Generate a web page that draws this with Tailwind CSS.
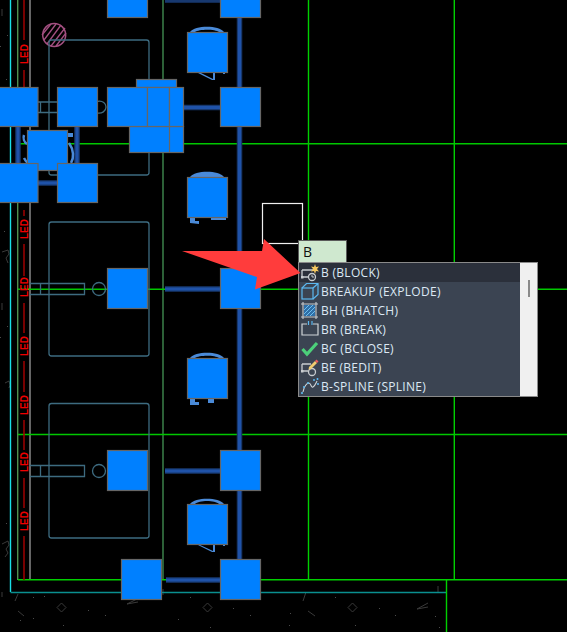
<!DOCTYPE html>
<html lang="en">
<head>
    <meta charset="UTF-8">
    <title>CAD block command</title>
    <script src="https://cdn.jsdelivr.net/npm/@tailwindcss/browser@4"></script>
</head>
<body class="bg-black overflow-hidden">
<div class="relative w-[567px] h-[632px] bg-black overflow-hidden">

    <!-- drawing -->
    <svg class="absolute inset-0" width="567" height="632" viewBox="0 0 567 632" fill="none">
        <!-- hatch noise -->
        <g stroke="#3a3a3a" stroke-width="1">
            <path d="M57 607.500l4.500-4.500 4.500 4.500-4.500 4.500z M203 607.500l4.500-4.500 4.500 4.500-4.500 4.500z M348 607.500l4.500-4.500 4.500 4.500-4.500 4.500z"/>
            <path d="M2 592v5 M18 594l-3 7 M18 611l6 5 M127 604l10-5 M127 604l11 -2 M163 595v-6 M306 592l-3 9 M308 611l7 5 M417 609l11-6 M417 609l11 -2 M438 592v-6"/>
            <path d="M2 544l6-3 1 4-3 4 2 4-3 4 M2 252l6-2 1 4-3 4 2 5 M5 383l4-2 1 4 -1 3"/>
            <path d="M2 9v7 M2 303v7"/>
        </g>
        <g fill="#4a4a4a">
            <rect x="7" y="35" width="1" height="1"/><rect x="0" y="46" width="1" height="1"/><rect x="6" y="79" width="1" height="1"/>
            <rect x="4" y="231" width="1" height="1"/><rect x="7" y="326" width="1" height="1"/><rect x="0" y="337" width="1" height="1"/>
            <rect x="6" y="523" width="1" height="1"/><rect x="20" y="620" width="1" height="1"/><rect x="33" y="597" width="1" height="1"/>
            <rect x="44" y="596" width="1" height="1"/><rect x="63" y="625" width="1" height="1"/><rect x="33" y="618" width="1" height="1"/>
            <rect x="88" y="610" width="1" height="1"/><rect x="105" y="615" width="1" height="1"/><rect x="125" y="597" width="1" height="1"/>
            <rect x="190" y="597" width="1" height="1"/><rect x="233" y="608" width="1" height="1"/><rect x="250" y="615" width="1" height="1"/>
            <rect x="178" y="619" width="1" height="1"/><rect x="210" y="627" width="1" height="1"/><rect x="289" y="625" width="1" height="1"/>
            <rect x="290" y="613" width="1" height="1"/><rect x="335" y="597" width="1" height="1"/><rect x="379" y="608" width="1" height="1"/>
            <rect x="395" y="615" width="1" height="1"/><rect x="355" y="625" width="1" height="1"/><rect x="435" y="616" width="1" height="1"/>
            <rect x="439" y="627" width="1" height="1"/>
        </g>

        <!-- frame lines -->
        <g stroke-width="1.400">
            <path d="M10.500 0V592" stroke="#19e0e8"/>
            <path d="M10.500 592.500H446" stroke="#0a8f8f"/>
            <path d="M17.700 0V580" stroke="#4f8f4f"/>
            <path d="M163 0V580" stroke="#3f8a4f"/>
            <path d="M30 0V580" stroke="#666666" stroke-width="2"/>
            <path d="M18 579.800H567 M308.500 0V580 M454.300 0V580 M446.500 580V632" stroke="#00d000"/>
            <path d="M19 143.800H567 M18 289.200H299 M347 289.200H567 M18 434.500H567" stroke="#00c800"/>
        </g>

        <!-- red LED circuit -->
        <path d="M24 0V40 M24 70V87 M24 210V216 M24 244V276 M24 303V333 M24 361V392 M24 420V450 M24 478V508 M24 536V580" stroke="#a00000" stroke-width="1.500"/>
        <g fill="#f00000" font-family="Liberation Sans, sans-serif" font-size="10" font-weight="700">
            <text transform="translate(27.500 64) rotate(-90)">LED</text>
            <text transform="translate(27.500 239) rotate(-90)">LED</text>
            <text transform="translate(27.500 297) rotate(-90)">LED</text>
            <text transform="translate(27.500 356) rotate(-90)">LED</text>
            <text transform="translate(27.500 415) rotate(-90)">LED</text>
            <text transform="translate(27.500 472) rotate(-90)">LED</text>
            <text transform="translate(27.500 531) rotate(-90)">LED</text>
        </g>

        <!-- hatched circle -->
        <g stroke="#a34f80" stroke-width="1.300">
            <circle cx="54.200" cy="35" r="11.500" stroke-width="1.500"/>
            <path d="M47 44L61 25 M51 46L65 28 M44 40L56 24 M42 35L51 24 M56 46L66 33"/>
        </g>

        <!-- room outlines -->
        <g stroke="#3d6b80" stroke-width="1.300">
            <rect x="49" y="40" width="100" height="135" rx="2.500"/>
            <rect x="49" y="222" width="100" height="134" rx="2.500"/>
            <rect x="49" y="403.500" width="100" height="134.500" rx="2.500"/>
            <path d="M30 283.500H84.500V294.500H30 M40.500 283.500V294.500"/>
            <circle cx="99" cy="289" r="6.500"/>
            <path d="M30 465.500H84.500V476.500H30 M40.500 465.500V476.500"/>
            <circle cx="99" cy="471" r="6.500"/>
            <path d="M38 102H57 M38 112.500H57 M40.500 102V112.500 M97 101.500C103 100 106 104 106 107C106 111 102 114 97 113"/>
        </g>

        <!-- pipes -->
        <g stroke="#17386f" stroke-width="5.500">
            <path d="M239.500 0V560"/>
            <path d="M183 107.500H220 M165 289H220 M165 471H220 M166 580H220 M165 0H220"/>
            <path d="M18 126V163 M77 126V163 M38 183H57"/>
        </g>
        <g stroke="#1f52a8" stroke-width="3">
            <path d="M239.500 0V560"/>
            <path d="M183 107.500H220 M165 289H220 M165 471H220 M166 580H220"/>
            <path d="M18 126V163 M77 126V163 M38 183H57"/>
        </g>

        <!-- tanks behind the blocks -->
        <g fill="#4a8ad8">
            <path d="M190 32C195 25 219 25 224 32H219C215 29 199 29 195 32Z"/>
            <path d="M199 72L213 79V72H215V80H212L198 73Z M223 72H225V74H223Z"/>
            <path d="M190 177C195 170 219 170 224 177Z"/>
            <path d="M190 217H195V221H199V224L190 223Z M211 217H226V220H211Z"/>
            <path d="M190 358C195 351 219 351 224 358H219C215 355 199 355 195 358Z"/>
            <path d="M190 398H195V402H199V405H190Z M208 398H214V403H208Z"/>
            <path d="M190 504C195 497 219 497 224 504H219C215 500 199 500 195 504Z"/>
            <path d="M198 544L213 551V544H215V552H212L198 545Z M223 544H225V546H223Z"/>
            <path d="M68 133H73V137H68Z"/>
        </g>
        <path d="M24 135C23 138 24 142 27 144 M24 158C25 160 26 162 28 163 M69 143C74 150 74 158 71 163" stroke="#4a8ad8" stroke-width="2.500"/>

        <!-- blocks -->
        <g fill="#0080ff" stroke="#666666" stroke-width="1.200">
            <rect x="136.500" y="79.500" width="40" height="8"/>
            <rect x="129.500" y="126.500" width="54" height="26"/>
            <path d="M169.500 126.500V152.500"/>
            <rect x="107.500" y="87.500" width="40" height="39"/>
            <rect x="147.500" y="87.500" width="22" height="39"/>
            <rect x="169.500" y="87.500" width="14" height="39"/>
            <rect x="107.500" y="-23" width="40" height="40.500"/>
            <rect x="220.500" y="-23" width="40" height="40.500"/>
            <rect x="-2" y="87.500" width="40" height="39"/>
            <rect x="57.500" y="87.500" width="40" height="39"/>
            <rect x="220.500" y="87.500" width="40" height="39"/>
            <rect x="27.500" y="130.500" width="40" height="40"/>
            <rect x="-2" y="163.500" width="40" height="39"/>
            <rect x="57.500" y="163.500" width="40" height="39"/>
            <rect x="187.500" y="32.500" width="40" height="40"/>
            <rect x="187.500" y="177.500" width="40" height="40"/>
            <rect x="187.500" y="358.500" width="40" height="40"/>
            <rect x="187.500" y="504.500" width="40" height="40"/>
            <rect x="107.500" y="268.500" width="40" height="40"/>
            <rect x="220.500" y="268.500" width="40" height="40"/>
            <rect x="107.500" y="450.500" width="40" height="40"/>
            <rect x="220.500" y="450.500" width="40" height="40"/>
            <rect x="121.500" y="559.500" width="40" height="40"/>
            <rect x="220.500" y="559.500" width="40" height="40"/>
        </g>

        <!-- pickbox -->
        <rect x="262.500" y="203.500" width="40" height="40" stroke="#f0f0f0" stroke-width="1.200"/>
    </svg>

    <svg class="absolute inset-0 z-20" width="567" height="632" viewBox="0 0 567 632">
        <path d="M182 251H262L264 239L300.500 273L255 289.500L257 277Z" fill="#ff3c3c"/>
    </svg>

    <!-- command input -->
    <div class="absolute z-10 left-[298px] top-[240px] w-[49px] h-[23px] bg-[#cfe8cf] border border-[#5a5a5a] flex items-center pl-1 text-[14px] text-[#101010] font-['Open_Sans',sans-serif]">B</div>

    <!-- autocomplete list -->
    <div class="absolute z-10 left-[298px] top-[262px] w-[240px] h-[135px] flex bg-[#3b4452] border border-[#8a8a8a] font-['Open_Sans',sans-serif] text-[12px] tracking-[0.3px] text-[#dce8f4]">
        <ul class="flex-1 flex flex-col">
            <li class="h-[19px] flex items-center gap-px pl-[1px] bg-[#2b303b]">
                <svg width="20" height="19" viewBox="0 0 20 19" fill="none">
                    <path d="M2 7H13 M2 7V14H8" stroke="#c8ccd0" stroke-width="1.300"/>
                    <rect x="1" y="13" width="2.500" height="2.500" fill="#c8ccd0"/>
                    <circle cx="12" cy="14" r="3.500" stroke="#c8ccd0" stroke-width="1.300"/>
                    <path d="M12 12V14H14" stroke="#c8ccd0"/>
                    <path d="M15 1L16 4L19 3.500L17 6L19 8.500L16 8L15 11L14 8L11 8.500L13 6L11 3.500L14 4Z" fill="#f5c860"/>
                </svg>
                <span>B (BLOCK)</span>
            </li>
            <li class="h-[19px] flex items-center gap-px pl-[1px]">
                <svg width="20" height="19" viewBox="0 0 20 19" fill="none" stroke="#5cb8f0" stroke-width="1.200">
                    <rect x="2" y="6" width="11" height="11"/>
                    <path d="M2 6L6.500 1.500H18V12.500L13 17 M13 6L18 1.500"/>
                </svg>
                <span>BREAKUP (EXPLODE)</span>
            </li>
            <li class="h-[19px] flex items-center gap-px pl-[1px]">
                <svg width="20" height="19" viewBox="0 0 20 19" fill="none">
                    <path d="M1 3H18 M1 16H18 M3 1V18 M16 1V18" stroke="#c8ccd0" stroke-width="1.100"/>
                    <rect x="4" y="4" width="11" height="11" fill="#2f6fa8"/>
                    <path d="M4 9L9 4 M4 13L13 4 M6 15L15 6 M10 15L15 10" stroke="#6fc0ee"/>
                </svg>
                <span>BH (BHATCH)</span>
            </li>
            <li class="h-[19px] flex items-center gap-px pl-[1px]">
                <svg width="20" height="19" viewBox="0 0 20 19" fill="none" stroke="#d0d4d8" stroke-width="1.200">
                    <path d="M7 4H2V15H18V4H13"/>
                    <path d="M8.500 1V5 M12 1V5" stroke="#5cb8f0"/>
                </svg>
                <span>BR (BREAK)</span>
            </li>
            <li class="h-[19px] flex items-center gap-px pl-[1px]">
                <svg width="20" height="19" viewBox="0 0 20 19" fill="none">
                    <path d="M2.500 10L7 15L17 4" stroke="#4cd07a" stroke-width="3.200"/>
                </svg>
                <span>BC (BCLOSE)</span>
            </li>
            <li class="h-[19px] flex items-center gap-px pl-[1px]">
                <svg width="20" height="19" viewBox="0 0 20 19" fill="none">
                    <path d="M2 6H11 M2 6V13H8" stroke="#c8ccd0" stroke-width="1.300"/>
                    <rect x="1" y="12" width="2.500" height="2.500" fill="#c8ccd0"/>
                    <circle cx="12" cy="14" r="3.500" stroke="#c8ccd0" stroke-width="1.300"/>
                    <path d="M9 9L15 3L17 5L11 11L8.500 11.500Z" fill="#f0cc70"/>
                    <path d="M15 3L16.500 1.500L18.500 3.500L17 5Z" fill="#ee5c5c"/>
                </svg>
                <span>BE (BEDIT)</span>
            </li>
            <li class="h-[19px] flex items-center gap-px pl-[1px]">
                <svg width="20" height="19" viewBox="0 0 20 19" fill="none">
                    <path d="M3 15C4 9 7 6 9 6C11 6 11 11 13 10C15 9 16 6 17 4" stroke="#d0d4d8" stroke-width="1.100"/>
                    <path d="M2 17V15 M4 11V9 M7 6H9 M13 3H15 M17.500 3V1 M18 8V6" stroke="#5cb8f0" stroke-width="1.600"/>
                </svg>
                <span>B-SPLINE (SPLINE)</span>
            </li>
        </ul>
        <div class="w-[17px] bg-[#f0f0f0] flex justify-center pt-[17px]">
            <div class="w-[2px] h-[17px] bg-[#8a8a8a]"></div>
        </div>
    </div>
</div>
</body>
</html>
